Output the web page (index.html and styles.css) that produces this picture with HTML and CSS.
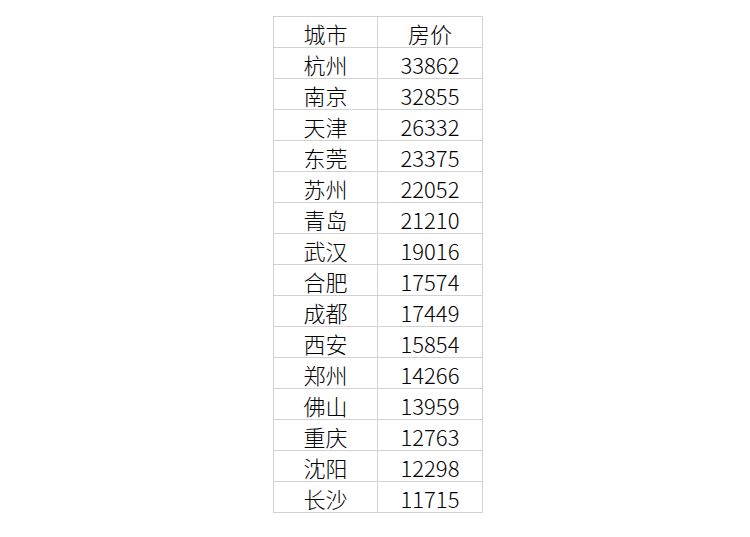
FILE: index.html
```html
<!DOCTYPE html>
<html lang="zh">
<head>
<meta charset="utf-8">
<link rel="stylesheet" href="styles.css">
</head>
<body>
<div class="page">
  <div class="sheet">
    <div class="cell">城市</div><div class="cell">房价</div>
    <div class="cell">杭州</div><div class="cell">33862</div>
    <div class="cell">南京</div><div class="cell">32855</div>
    <div class="cell">天津</div><div class="cell">26332</div>
    <div class="cell">东莞</div><div class="cell">23375</div>
    <div class="cell">苏州</div><div class="cell">22052</div>
    <div class="cell">青岛</div><div class="cell">21210</div>
    <div class="cell">武汉</div><div class="cell">19016</div>
    <div class="cell">合肥</div><div class="cell">17574</div>
    <div class="cell">成都</div><div class="cell">17449</div>
    <div class="cell">西安</div><div class="cell">15854</div>
    <div class="cell">郑州</div><div class="cell">14266</div>
    <div class="cell">佛山</div><div class="cell">13959</div>
    <div class="cell">重庆</div><div class="cell">12763</div>
    <div class="cell">沈阳</div><div class="cell">12298</div>
    <div class="cell">长沙</div><div class="cell">11715</div>
  </div>
</div>
</body>
</html>
```

FILE: styles.css
```css
html, body {
  margin: 0;
  padding: 0;
  background: #ffffff;
}
.page {
  width: 750px;
  height: 537px;
  display: flex;
  justify-content: flex-start;
  padding: 16px 0 0 273px;
  box-sizing: border-box;
}
.sheet {
  display: grid;
  grid-template-columns: 103px 104px;
  grid-auto-rows: 30px;
  gap: 1px;
  background: #d2d2d2;
  border: 1px solid #d2d2d2;
  align-self: flex-start;
}
.cell {
  background: #ffffff;
  font-family: "Noto Sans CJK SC", "Noto Sans", sans-serif;
  font-size: 22px;
  font-weight: 300;
  color: #000000;
  display: flex;
  align-items: center;
  justify-content: center;
  line-height: 24px;
  padding-top: 1px;
  box-sizing: border-box;
}
```
